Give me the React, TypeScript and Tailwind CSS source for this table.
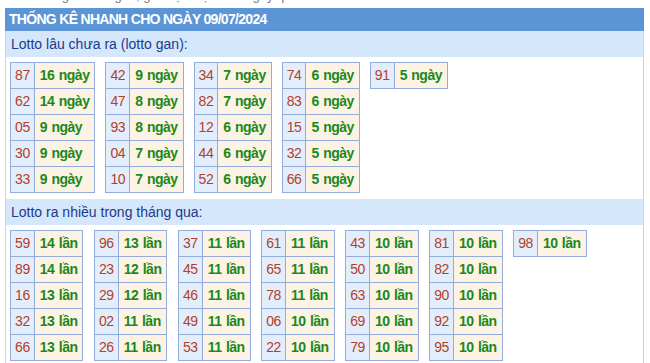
const ganTables: [string, string][][] = [
  [["87", "16 ngày"], ["62", "14 ngày"], ["05", "9 ngày"], ["30", "9 ngày"], ["33", "9 ngày"]],
  [["42", "9 ngày"], ["47", "8 ngày"], ["93", "8 ngày"], ["04", "7 ngày"], ["10", "7 ngày"]],
  [["34", "7 ngày"], ["82", "7 ngày"], ["12", "6 ngày"], ["44", "6 ngày"], ["52", "6 ngày"]],
  [["74", "6 ngày"], ["83", "6 ngày"], ["15", "5 ngày"], ["32", "5 ngày"], ["66", "5 ngày"]],
  [["91", "5 ngày"]],
];

const hotTables: [string, string][][] = [
  [["59", "14 lần"], ["89", "14 lần"], ["16", "13 lần"], ["32", "13 lần"], ["66", "13 lần"]],
  [["96", "13 lần"], ["23", "12 lần"], ["29", "12 lần"], ["02", "11 lần"], ["26", "11 lần"]],
  [["37", "11 lần"], ["45", "11 lần"], ["46", "11 lần"], ["49", "11 lần"], ["53", "11 lần"]],
  [["61", "11 lần"], ["65", "11 lần"], ["78", "11 lần"], ["06", "10 lần"], ["22", "10 lần"]],
  [["43", "10 lần"], ["50", "10 lần"], ["63", "10 lần"], ["69", "10 lần"], ["79", "10 lần"]],
  [["81", "10 lần"], ["82", "10 lần"], ["90", "10 lần"], ["92", "10 lần"], ["95", "10 lần"]],
  [["98", "10 lần"]],
];

function LotoTable({ rows }: { rows: [string, string][] }) {
  return (
    <table className="border-collapse border border-[#93acdb]">
      <tbody>
        {rows.map(([num, val]) => (
          <tr key={num}>
            <td className="border border-[#93acdb] bg-[#e3eefc] px-[4px] py-[4px] leading-[17px] text-[14px] tracking-[-0.4px] text-[#b3402a]">
              {num}
            </td>
            <td className="border border-[#93acdb] bg-[#fdf3e4] px-[5px] py-[4px] leading-[17px] text-[14px] tracking-[-0.5px] [word-spacing:1px] font-bold text-[#1c881c] whitespace-nowrap">
              {val}
            </td>
          </tr>
        ))}
      </tbody>
    </table>
  );
}

function SubHeader({ title }: { title: string }) {
  return (
    <div className="h-[26px] bg-[#d5e7fa] pl-[5px] flex items-center text-[14px] text-[#1b3a8c]">
      {title}
    </div>
  );
}

export default function App() {
  return (
    <div className="w-[650px] h-[363px] overflow-hidden bg-white font-['Liberation_Sans',Arial,sans-serif]">
      {/* clipped line above the panel */}
      <div className="h-[8px] overflow-hidden">
        <div className="mt-[-11px] pl-[6px] leading-[13px] text-[13px] text-[#777]">
          Xem thống kê loto gan, giải đặc biệt theo ngày qua nhiều năm
        </div>
      </div>

      <div className="ml-[5px] w-[639px] border-x border-[#c9d3e6]">
        <div className="h-[23px] -mx-px bg-[#5b95d5] pl-[4px] flex items-center text-[14px] tracking-[-0.7px] font-bold text-white">
          THỐNG KÊ NHANH CHO NGÀY 09/07/2024
        </div>

        <SubHeader title="Lotto lâu chưa ra (lotto gan):" />
        <div className="flex items-start gap-[10px] pl-[4px] pt-[5px] pb-[6px]">
          {ganTables.map((rows, i) => (
            <LotoTable key={i} rows={rows} />
          ))}
        </div>

        <SubHeader title="Lotto ra nhiều trong tháng qua:" />
        <div className="flex items-start gap-[10.5px] pl-[4px] pt-[5px] pb-[6px]">
          {hotTables.map((rows, i) => (
            <LotoTable key={i} rows={rows} />
          ))}
        </div>
      </div>
    </div>
  );
}
